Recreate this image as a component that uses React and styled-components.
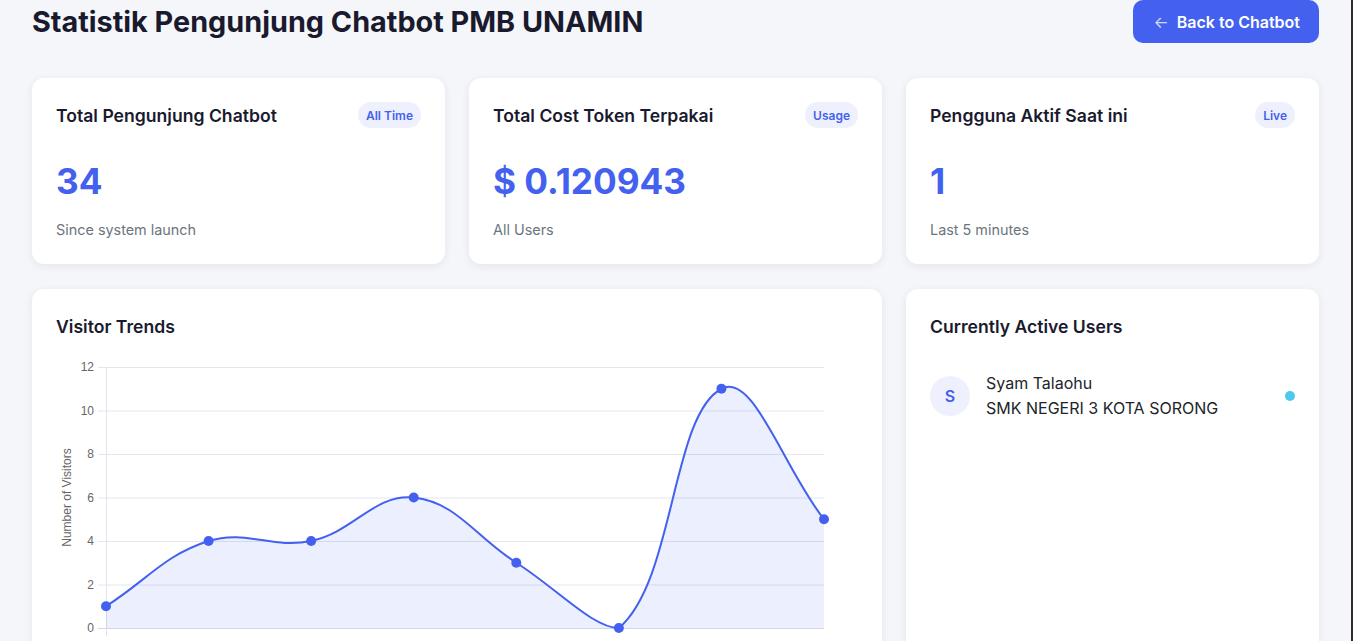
import React from "react";
import styled, { createGlobalStyle } from "styled-components";

const GlobalStyle = createGlobalStyle`
  * { box-sizing: border-box; }
  body {
    margin: 0;
    background: #f5f6fa;
    font-family: Inter, "Noto Sans", sans-serif;
    color: #1a1a2e;
  }
`;

const visitors = [1, 4, 4, 6, 3, 0, 11, 5];

const stats = [
  { title: "Total Pengunjung Chatbot", badge: "All Time", value: "34", note: "Since system launch" },
  { title: "Total Cost Token Terpakai", badge: "Usage", value: "$ 0.120943", note: "All Users" },
  { title: "Pengguna Aktif Saat ini", badge: "Live", value: "1", note: "Last 5 minutes" },
];

const activeUsers = [{ name: "Syam Talaohu", school: "SMK NEGERI 3 KOTA SORONG" }];

// chart geometry
const W = 802;
const H = 330;
const area = { left: 50, right: 768, top: 13, bottom: 274 };
const yMax = 12;

const px = (i) => area.left + (i * (area.right - area.left)) / (visitors.length - 1);
const py = (v) => area.bottom - (v / yMax) * (area.bottom - area.top);

const clamp = (v, lo, hi) => Math.max(lo, Math.min(hi, v));

// same spline as chart.js (tension 0.4, capped to chart area)
function buildPath(pts, t = 0.4) {
  const cps = pts.map((cur, i) => {
    const prev = pts[i - 1] || cur;
    const next = pts[i + 1] || cur;
    const d01 = Math.hypot(cur.x - prev.x, cur.y - prev.y);
    const d12 = Math.hypot(next.x - cur.x, next.y - cur.y);
    let s01 = d01 / (d01 + d12);
    let s12 = d12 / (d01 + d12);
    if (isNaN(s01)) s01 = 0;
    if (isNaN(s12)) s12 = 0;
    const fa = t * s01;
    const fb = t * s12;
    const cap = (p) => ({
      x: clamp(p.x, area.left, area.right),
      y: clamp(p.y, area.top, area.bottom),
    });
    return {
      prev: cap({ x: cur.x - fa * (next.x - prev.x), y: cur.y - fa * (next.y - prev.y) }),
      next: cap({ x: cur.x + fb * (next.x - prev.x), y: cur.y + fb * (next.y - prev.y) }),
    };
  });
  let d = `M${pts[0].x},${pts[0].y}`;
  for (let i = 1; i < pts.length; i++) {
    const a = cps[i - 1].next;
    const b = cps[i].prev;
    d += ` C${a.x},${a.y} ${b.x},${b.y} ${pts[i].x},${pts[i].y}`;
  }
  return d;
}

const VisitorChart = () => {
  const pts = visitors.map((v, i) => ({ x: px(i), y: py(v) }));
  const line = buildPath(pts);
  const fill = `${line} L${area.right},${area.bottom} L${area.left},${area.bottom} Z`;
  const ticks = [0, 2, 4, 6, 8, 10, 12];

  return (
    <ChartSvg width={W} height={H} viewBox={`0 0 ${W} ${H}`}>
      {ticks.map((t) => (
        <g key={t}>
          <line x1={area.left - 8} x2={area.right} y1={py(t) + 0.5} y2={py(t) + 0.5} stroke={t === 0 ? "#d3d7e0" : "#e4e6ee"} />
          <text x={area.left - 12} y={py(t) + 4} textAnchor="end" fontSize="12" fill="#666" fontFamily="'Liberation Sans', Arial, sans-serif">
            {t}
          </text>
        </g>
      ))}
      <line x1={area.left + 0.5} x2={area.left + 0.5} y1={area.top} y2={area.bottom + 8} stroke="#e0e3eb" />
      <text
        transform={`translate(15 ${(area.top + area.bottom) / 2}) rotate(-90)`}
        textAnchor="middle"
        fontSize="12"
        fill="#666"
        fontFamily="'Liberation Sans', Arial, sans-serif"
      >
        Number of Visitors
      </text>
      <path d={fill} fill="rgba(67, 97, 238, 0.1)" />
      <path d={line} fill="none" stroke="#4361ee" strokeWidth="2" />
      {pts.map((p, i) => (
        <circle key={i} cx={p.x} cy={p.y} r="5" fill="#4361ee" />
      ))}
    </ChartSvg>
  );
};

const App = () => {
  return (
    <>
      <GlobalStyle />
      <Page>
        <Header>
          <PageTitle>Statistik Pengunjung Chatbot PMB UNAMIN</PageTitle>
          <BackButton>
            <Arrow>←</Arrow> Back to Chatbot
          </BackButton>
        </Header>

        <Grid>
          {stats.map((s) => (
            <Card key={s.title}>
              <CardHeader>
                <CardTitle>{s.title}</CardTitle>
                <Badge>{s.badge}</Badge>
              </CardHeader>
              <StatValue>{s.value}</StatValue>
              <StatNote>{s.note}</StatNote>
            </Card>
          ))}
        </Grid>

        <Grid>
          <Card $span={2}>
            <CardTitle>Visitor Trends</CardTitle>
            <VisitorChart />
          </Card>
          <Card>
            <CardTitle>Currently Active Users</CardTitle>
            <UserList>
              {activeUsers.map((u) => (
                <UserRow key={u.name}>
                  <Avatar>{u.name[0]}</Avatar>
                  <UserInfo>
                    <UserName>{u.name}</UserName>
                    <UserSchool>{u.school}</UserSchool>
                  </UserInfo>
                  <OnlineDot />
                </UserRow>
              ))}
            </UserList>
          </Card>
        </Grid>
      </Page>
    </>
  );
};

export default App;

const Page = styled.div`
  min-height: 100vh;
  padding: 0 32px 32px;
  border-right: 2px solid #2b2b2b;
`;

const Header = styled.header`
  display: flex;
  align-items: center;
  justify-content: space-between;
  height: 43px;
  margin-bottom: 35px;
`;

const PageTitle = styled.h1`
  margin: 0;
  font-size: 28.8px;
  font-weight: 700;
  color: #1a1a2e;
`;

const BackButton = styled.button`
  display: flex;
  align-items: center;
  gap: 8px;
  height: 43px;
  padding: 0 19px 0 20px;
  border: none;
  border-radius: 10px;
  background: #4361ee;
  color: #fff;
  font-family: Inter, sans-serif;
  font-size: 16px;
  font-weight: 600;
  cursor: pointer;
`;

const Arrow = styled.span`
  font-weight: 400;
  opacity: 0.75;
`;

const Grid = styled.div`
  display: grid;
  grid-template-columns: repeat(3, 1fr);
  gap: 24px;
  margin-bottom: 25px;
`;

const Card = styled.div`
  grid-column: span ${(p) => p.$span || 1};
  background: #fff;
  border-radius: 12px;
  padding: 24px;
  box-shadow: 0 2px 8px rgba(30, 40, 80, 0.08);
`;

const CardHeader = styled.div`
  display: flex;
  align-items: center;
  justify-content: space-between;
  height: 26px;
  margin-bottom: 31px;
`;

const CardTitle = styled.h3`
  margin: 0;
  font-size: 17.6px;
  line-height: 27px;
  font-weight: 600;
  color: #1a1a2e;
`;

const Badge = styled.span`
  padding: 0 8px;
  height: 26px;
  line-height: 27px;
  border-radius: 999px;
  background: #eef1fd;
  color: #4361ee;
  font-size: 12px;
  font-weight: 600;
`;

const StatValue = styled.div`
  font-size: 35.2px;
  line-height: 44px;
  font-weight: 700;
  color: #4361ee;
  margin-bottom: 17px;
`;

const StatNote = styled.div`
  font-size: 14.4px;
  line-height: 20px;
  color: #6c757d;
`;

const ChartSvg = styled.svg`
  display: block;
  margin-top: 14px;
`;

const UserList = styled.div`
  margin-top: 16px;
`;

const UserRow = styled.div`
  display: flex;
  align-items: center;
  gap: 16px;
  padding: 15px 0;
`;

const Avatar = styled.div`
  width: 40px;
  height: 40px;
  flex-shrink: 0;
  border-radius: 50%;
  background: #eef1fd;
  color: #4361ee;
  display: flex;
  align-items: center;
  justify-content: center;
  font-size: 16px;
  font-weight: 600;
`;

const UserInfo = styled.div`
  flex: 1;
  display: flex;
  flex-direction: column;
`;

const UserName = styled.span`
  font-size: 16px;
  line-height: 25px;
  color: #212529;
`;

const UserSchool = styled.span`
  font-size: 16px;
  line-height: 25px;
  color: #212529;
`;

const OnlineDot = styled.span`
  width: 10px;
  height: 10px;
  border-radius: 50%;
  background: #4cc9f0;
`;
